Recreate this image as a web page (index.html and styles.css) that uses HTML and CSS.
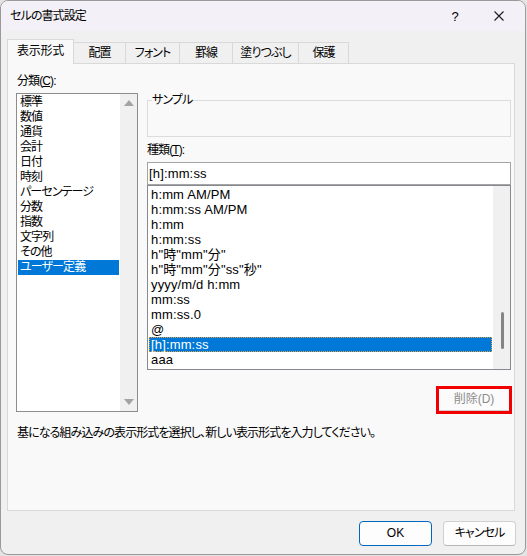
FILE: index.html
```html
<!DOCTYPE html>
<html lang="ja">
<head>
<meta charset="utf-8">
<title>セルの書式設定</title>
<link rel="stylesheet" href="styles.css">
</head>
<body>
<div class="dialog">
  <div class="titlebar">
    <span class="title">セルの書式設定</span>
    <span class="ctrl help">?</span>
    <span class="ctrl close"><svg width="10" height="10" viewBox="0 0 10 10"><path d="M0.5 0.5 L9.5 9.5 M9.5 0.5 L0.5 9.5" stroke="#1a1a1a" stroke-width="1.1" fill="none"/></svg></span>
  </div>
  <div class="tabs">
    <div class="tab active w1">表示形式</div>
    <div class="tab w2">配置</div>
    <div class="tab w3">フォント</div>
    <div class="tab w4">罫線</div>
    <div class="tab w5">塗りつぶし</div>
    <div class="tab w6 last">保護</div>
  </div>
  <div class="panel">
    <div class="label cat-label">分類(<u>C</u>):</div>
    <div class="main">
      <div class="catlist">
        <div class="items">
          <div class="item">標準</div>
          <div class="item">数値</div>
          <div class="item">通貨</div>
          <div class="item">会計</div>
          <div class="item">日付</div>
          <div class="item">時刻</div>
          <div class="item">パーセンテージ</div>
          <div class="item">分数</div>
          <div class="item">指数</div>
          <div class="item">文字列</div>
          <div class="item">その他</div>
          <div class="item sel">ユーザー定義</div>
        </div>
        <div class="vscroll">
          <span class="arrow up"></span>
          <span class="arrow down"></span>
        </div>
      </div>
      <div class="right">
        <fieldset class="sample">
          <legend>サンプル</legend>
          <div class="sample-body"></div>
        </fieldset>
        <div class="label type-label">種類(<u>T</u>):</div>
        <div class="input">[h]:mm:ss</div>
        <div class="fmtlist">
          <div class="items fmt">
            <div class="item">h:mm AM/PM</div>
            <div class="item">h:mm:ss AM/PM</div>
            <div class="item">h:mm</div>
            <div class="item">h:mm:ss</div>
            <div class="item">h"時"mm"分"</div>
            <div class="item">h"時"mm"分"ss"秒"</div>
            <div class="item">yyyy/m/d h:mm</div>
            <div class="item">mm:ss</div>
            <div class="item">mm:ss.0</div>
            <div class="item">@</div>
            <div class="item sel focus">[h]:mm:ss</div>
            <div class="item">aaa</div>
          </div>
          <div class="vscroll fmt-scroll">
            <span class="thumb"></span>
          </div>
        </div>
        <div class="del-row">
          <div class="del-mark"><div class="del-btn">削除(D)</div></div>
        </div>
      </div>
    </div>
    <div class="desc">基になる組み込みの表示形式を選択し、新しい表示形式を入力してください。</div>
  </div>
  <div class="footer">
    <div class="btn ok">OK</div>
    <div class="btn">キャンセル</div>
  </div>
</div>
</body>
</html>
```
FILE: styles.css
```css
* { box-sizing: border-box; }
html, body { margin: 0; padding: 0; }
body {
  background: #e4e4e4;
  font-family: "Liberation Sans", "Noto Sans CJK JP", sans-serif;
  font-size: 12px;
  line-height: 15px;
  color: #000;
  font-feature-settings: "palt" 1;
  letter-spacing: -0.9px;
  width: 527px;
  height: 556px;
  overflow: hidden;
}
.dialog {
  width: 526px;
  height: 555px;
  border: 1px solid #9a9a9a;
  border-radius: 8px;
  background: #f0f0f0;
  overflow: hidden;
  display: flex;
  flex-direction: column;
}
.titlebar {
  height: 30px;
  flex: none;
  background: #f3f0f7;
  display: flex;
  align-items: center;
  padding-left: 9px;
  padding-right: 4px;
}
.title { font-size: 12px; }
.ctrl {
  width: 44px;
  height: 30px;
  display: flex;
  align-items: center;
  justify-content: center;
  letter-spacing: 0;
}
.help { margin-left: auto; font-size: 13px; }
.close svg { display: block; }

.tabs {
  display: flex;
  align-items: flex-end;
  margin-top: 8px;
  padding-left: 6px;
  height: 24px;
  flex: none;
}
.tab {
  height: 21px;
  background: #f0f0f0;
  border: 1px solid #d9d9d9;
  border-bottom: none;
  border-right: none;
  display: flex;
  align-items: center;
  justify-content: center;
  padding-top: 1px;
}
.tab.last { border-right: 1px solid #d9d9d9; }
.tab.active {
  height: 25px;
  background: #f9f9f9;
  border-right: 1px solid #d9d9d9;
  margin-bottom: -1px;
  position: relative;
  z-index: 1;
  padding-top: 0;
  padding-bottom: 1px;
  letter-spacing: -0.3px;
}
.w1 { width: 67px; }
.w2 { width: 51px; border-left: none; }
.w3 { width: 54px; }
.w4 { width: 53px; }
.w5 { width: 66px; }
.w6 { width: 51px; }

.panel {
  height: 448px;
  flex: none;
  margin: 0 10px 0 6px;
  background: #f9f9f9;
  border: 1px solid #d9d9d9;
  padding: 10px 2px 0 8px;
}
.label { height: 15px; }
.cat-label { padding-left: 1px; }
.main {
  display: flex;
  margin-top: 4px;
  align-items: flex-start;
}
.catlist {
  width: 122px;
  height: 319px;
  border: 1px solid #8d8d8d;
  background: #fff;
  display: flex;
  flex: none;
}
.items {
  flex: 1;
  padding: 1px 1px 0 1px;
}
.item {
  height: 15px;
  line-height: 15px;
  padding-left: 2px;
  white-space: nowrap;
}
.item.sel {
  background: #0078d7;
  color: #fff;
}
.fmt .item {
  font-size: 13px;
  letter-spacing: 0.15px;
  line-height: 16px;
}
.item.focus {
  outline: 1px dotted #e0a040;
  outline-offset: -1px;
}
.vscroll {
  width: 17px;
  background: #f0f0f0;
  flex: none;
  display: flex;
  flex-direction: column;
  justify-content: space-between;
  align-items: center;
  padding: 6px 0 6px 0;
}
.arrow {
  width: 0;
  height: 0;
  border-left: 5px solid transparent;
  border-right: 5px solid transparent;
}
.arrow.up { border-bottom: 6px solid #a3a3a3; }
.arrow.down { border-top: 6px solid #a3a3a3; }

.right {
  margin-left: 9px;
  width: 364px;
  flex: none;
}
.sample {
  margin: 0;
  padding: 0;
  border: 1px solid #dcdcdc;
  min-width: 0;
}
.sample legend {
  margin-left: 4px;
  padding: 0 1px 0 0;
  line-height: 15px;
}
.sample-body { height: 28px; }
.type-label { margin-top: 6px; }
.input {
  margin-top: 4px;
  height: 23px;
  border: 1px solid #a5a5a5;
  background: #fff;
  padding-left: 1px;
  font-size: 13px;
  letter-spacing: 0.15px;
  line-height: 22px;
}
.fmtlist {
  height: 185px;
  border: 1px solid #868a8f;
  background: #fff;
  display: flex;
}
.fmt-scroll {
  justify-content: flex-start;
  padding: 0;
}
.thumb {
  width: 3px;
  height: 37px;
  margin-top: 126px;
  margin-left: 2px;
  background: #858585;
  border-radius: 2px;
}
.del-row {
  display: flex;
  justify-content: flex-end;
  margin-top: 16px;
  margin-right: -1px;
}
.del-mark {
  width: 76px;
  height: 28px;
  border: 3px solid #f20000;
  background: #fbfbfb;
}
.del-btn {
  height: 22px;
  border-bottom: 1px solid #d0d0d0;
  color: #8c8c8c;
  text-align: center;
  line-height: 21px;
  font-size: 12px;
  letter-spacing: 0;
}
.desc {
  margin-top: 12px;
  padding-left: 1px;
  white-space: nowrap;
}
.footer {
  display: flex;
  justify-content: flex-end;
  gap: 11px;
  margin-top: 10px;
  padding-right: 9px;
}
.btn {
  width: 73px;
  height: 25px;
  border: 1px solid #d0d0d0;
  border-bottom-color: #b8b8b8;
  border-radius: 4px;
  background: #fdfdfd;
  display: flex;
  align-items: center;
  justify-content: center;
  font-size: 12px;
}
.btn.ok {
  border: 1px solid #0067c0;
  letter-spacing: 0;
}
```
